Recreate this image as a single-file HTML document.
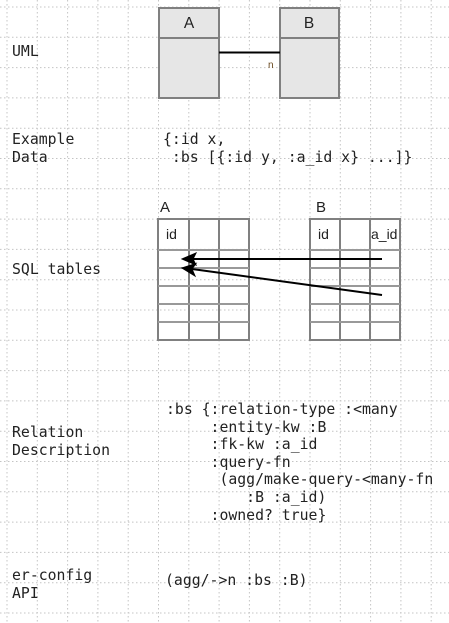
<!DOCTYPE html>
<html><head><meta charset="utf-8"><style>
html,body{margin:0;padding:0;background:#fff;width:449px;height:623px;overflow:hidden;position:relative}
.t{position:absolute;font-family:"DejaVu Sans Mono","Liberation Mono",monospace;font-size:14.8px;line-height:17.6px;color:#222;white-space:pre;margin:0}
svg{position:absolute;left:0;top:0}
</style></head><body>
<svg width="449" height="623" xmlns="http://www.w3.org/2000/svg">
<g stroke="#c4c4c4" stroke-width="1" stroke-dasharray="1.5,2.5">
<line x1="7" y1="0" x2="7" y2="623"/><line x1="37.3" y1="0" x2="37.3" y2="623"/><line x1="67.6" y1="0" x2="67.6" y2="623"/><line x1="97.9" y1="0" x2="97.9" y2="623"/><line x1="128.2" y1="0" x2="128.2" y2="623"/><line x1="158.5" y1="0" x2="158.5" y2="623"/><line x1="188.8" y1="0" x2="188.8" y2="623"/><line x1="219.1" y1="0" x2="219.1" y2="623"/><line x1="249.4" y1="0" x2="249.4" y2="623"/><line x1="279.7" y1="0" x2="279.7" y2="623"/><line x1="310" y1="0" x2="310" y2="623"/><line x1="340.3" y1="0" x2="340.3" y2="623"/><line x1="370.6" y1="0" x2="370.6" y2="623"/><line x1="400.9" y1="0" x2="400.9" y2="623"/><line x1="431.2" y1="0" x2="431.2" y2="623"/>
<line y1="7" x1="0" y2="7" x2="449"/><line y1="37.3" x1="0" y2="37.3" x2="449"/><line y1="67.6" x1="0" y2="67.6" x2="449"/><line y1="97.9" x1="0" y2="97.9" x2="449"/><line y1="128.2" x1="0" y2="128.2" x2="449"/><line y1="158.5" x1="0" y2="158.5" x2="449"/><line y1="188.8" x1="0" y2="188.8" x2="449"/><line y1="219.1" x1="0" y2="219.1" x2="449"/><line y1="249.4" x1="0" y2="249.4" x2="449"/><line y1="279.7" x1="0" y2="279.7" x2="449"/><line y1="310" x1="0" y2="310" x2="449"/><line y1="340.3" x1="0" y2="340.3" x2="449"/><line y1="370.6" x1="0" y2="370.6" x2="449"/><line y1="400.9" x1="0" y2="400.9" x2="449"/><line y1="431.2" x1="0" y2="431.2" x2="449"/><line y1="461.5" x1="0" y2="461.5" x2="449"/><line y1="491.8" x1="0" y2="491.8" x2="449"/><line y1="522.1" x1="0" y2="522.1" x2="449"/><line y1="552.4" x1="0" y2="552.4" x2="449"/><line y1="582.7" x1="0" y2="582.7" x2="449"/><line y1="613" x1="0" y2="613" x2="449"/>
</g>
<g fill="#e6e6e6" stroke="#808080" stroke-width="2">
<rect x="159" y="8" width="60" height="90"/><line x1="159" y1="38" x2="219" y2="38"/>
<rect x="280" y="8" width="59" height="90"/><line x1="280" y1="38" x2="339" y2="38"/>
</g>
<line x1="219" y1="52.5" x2="280" y2="52.5" stroke="#000" stroke-width="2"/>
<g font-family="Liberation Sans,sans-serif" fill="#222">
<text x="189" y="28" font-size="15.5" text-anchor="middle">A</text>
<text x="309" y="28" font-size="15.5" text-anchor="middle">B</text>
<text x="268" y="68" font-size="10" fill="#6a4a20">n</text>
<text x="160" y="212" font-size="15">A</text>
<text x="316" y="212" font-size="15">B</text>
<text x="166" y="239" font-size="14">id</text>
<text x="318" y="239" font-size="14">id</text>
<text x="371" y="239" font-size="14">a_id</text>
</g>
<g fill="none" stroke="#808080" stroke-width="2">
<rect x="158" y="219" width="91" height="121"/>
<line x1="189" y1="219" x2="189" y2="340"/><line x1="219" y1="219" x2="219" y2="340"/>
<rect x="310" y="219" width="90" height="121"/>
<line x1="340" y1="219" x2="340" y2="340"/><line x1="370" y1="219" x2="370" y2="340"/>
</g>
<g stroke="#999" stroke-width="2">
<line x1="158" y1="250" x2="249" y2="250"/><line x1="158" y1="268" x2="249" y2="268"/><line x1="158" y1="286" x2="249" y2="286"/><line x1="158" y1="304" x2="249" y2="304"/><line x1="158" y1="322" x2="249" y2="322"/>
<line x1="310" y1="250" x2="400" y2="250"/><line x1="310" y1="268" x2="400" y2="268"/><line x1="310" y1="286" x2="400" y2="286"/><line x1="310" y1="304" x2="400" y2="304"/><line x1="310" y1="322" x2="400" y2="322"/>
</g>
<g stroke="#000" stroke-width="2" fill="#000">
<line x1="382" y1="259" x2="192" y2="259"/>
<polygon points="182,259 196,253 193,259 196,265" stroke-width="1"/>
<line x1="382" y1="295" x2="192" y2="269"/>
<polygon points="182,268 196,263.5 192,269 195,276" stroke-width="1"/>
</g>
</svg>
<div class="t" style="left:12px;top:43px">UML</div>
<div class="t" style="left:12px;top:131px">Example
Data</div>
<div class="t" style="left:163px;top:131px">{:id x,
 :bs [{:id y, :a_id x} ...]}</div>
<div class="t" style="left:12px;top:261px">SQL tables</div>
<div class="t" style="left:12px;top:424px">Relation
Description</div>
<div class="t" style="left:166px;top:401px">:bs {:relation-type :&lt;many
     :entity-kw :B
     :fk-kw :a_id
     :query-fn
      (agg/make-query-&lt;many-fn
         :B :a_id)
     :owned? true}</div>
<div class="t" style="left:12px;top:567px">er-config
API</div>
<div class="t" style="left:165px;top:572px">(agg/-&gt;n :bs :B)</div>
</body></html>
